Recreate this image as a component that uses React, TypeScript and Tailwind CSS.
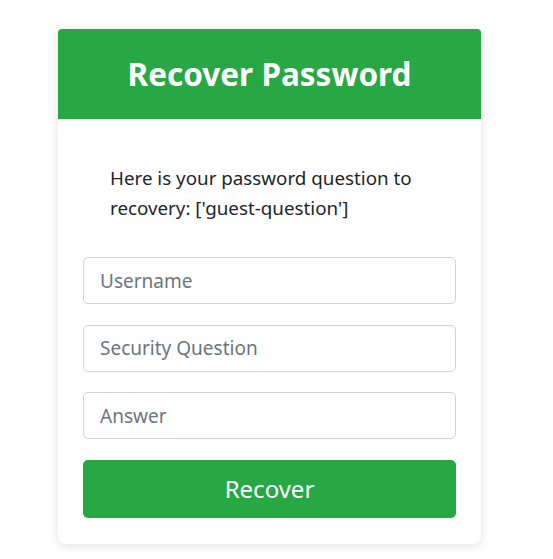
import React from "react";

export default function App() {
  return (
    <div className="min-h-[559px] w-full bg-white pt-[29px]" style={{ fontFamily: '"Noto Sans", "Open Sans", sans-serif' }}>
      <div className="ml-[58px] w-[423px] rounded-b-[8px] rounded-t-[4px] bg-white shadow-[0_2px_10px_rgba(0,0,0,0.12)]">
        <div className="flex h-[90px] items-center justify-center rounded-t-[4px] bg-[#28a745]">
          <h1 className="text-[31.5px] font-bold leading-none text-white">Recover Password</h1>
        </div>
        <div className="px-[25px] pb-[26px] pt-[44px]">
          <p className="px-[27px] text-[18.8px] leading-[30px] text-[#212529]">
            Here is your password question to recovery: ['guest-question']
          </p>
          <div className="mt-[34px] flex flex-col gap-[20.5px]">
            <input
              placeholder="Username"
              className="h-[47px] w-full rounded-[5px] border border-[#ced4da] px-[16px] text-[19px] text-[#495057] outline-none placeholder:text-[#6c757d]"
            />
            <input
              placeholder="Security Question"
              className="h-[47px] w-full rounded-[5px] border border-[#ced4da] px-[16px] text-[19px] text-[#495057] outline-none placeholder:text-[#6c757d]"
            />
            <input
              placeholder="Answer"
              className="h-[47px] w-full rounded-[5px] border border-[#ced4da] px-[16px] text-[19px] text-[#495057] outline-none placeholder:text-[#6c757d]"
            />
            <button className="h-[58px] w-full rounded-[5px] bg-[#28a745] text-[24px] text-white">Recover</button>
          </div>
        </div>
      </div>
    </div>
  );
}
